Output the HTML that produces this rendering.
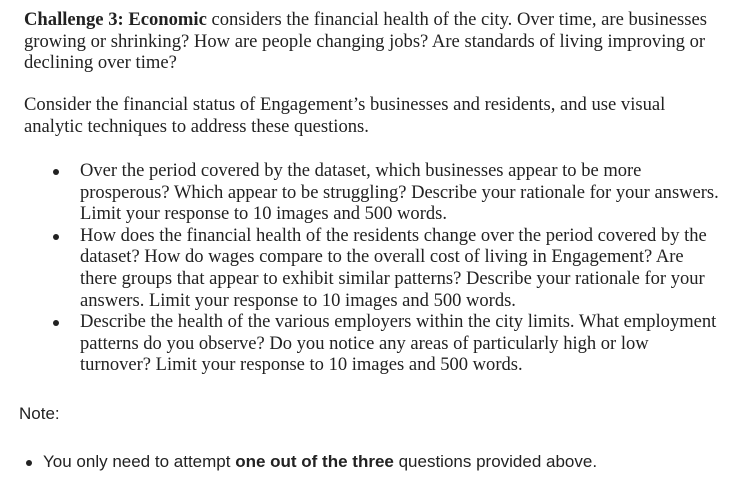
<!DOCTYPE html>
<html><head><style>
body{margin:0;background:#fff;width:743px;height:480px;overflow:hidden;position:relative}
.s{position:absolute;font-family:"Liberation Serif",serif;font-size:18.6px;color:#222;white-space:nowrap;line-height:21.6px}
.n{position:absolute;font-family:"Liberation Sans",sans-serif;font-size:17px;color:#222;white-space:nowrap}
.d{position:absolute;width:6px;height:6px;border-radius:50%;background:#222}
</style></head><body>
<div class="s" style="left:24px;top:9px"><b>Challenge 3: Economic</b> considers the financial health of the city. Over time, are businesses<br>growing or shrinking? How are people changing jobs? Are standards of living improving or<br>declining over time?</div>
<div class="s" style="left:24px;top:94px">Consider the financial status of Engagement’s businesses and residents, and use visual<br>analytic techniques to address these questions.</div>
<div class="d" style="left:53px;top:169px"></div>
<div class="d" style="left:53px;top:234px"></div>
<div class="d" style="left:53px;top:320px"></div>
<div class="s" style="left:80px;top:160px;font-size:18.55px">Over the period covered by the dataset, which businesses appear to be more<br>prosperous? Which appear to be struggling? Describe your rationale for your answers.<br>Limit your response to 10 images and 500 words.<br>How does the financial health of the residents change over the period covered by the<br>dataset? How do wages compare to the overall cost of living in Engagement? Are<br>there groups that appear to exhibit similar patterns? Describe your rationale for your<br>answers. Limit your response to 10 images and 500 words.<br>Describe the health of the various employers within the city limits. What employment<br>patterns do you observe? Do you notice any areas of particularly high or low<br>turnover? Limit your response to 10 images and 500 words.</div>
<div class="n" style="left:19px;top:404px">Note:</div>
<div class="d" style="left:26px;top:460px"></div>
<div class="n" style="left:43px;top:452px">You only need to attempt <b>one out of the three</b> questions provided above.</div>
</body></html>
